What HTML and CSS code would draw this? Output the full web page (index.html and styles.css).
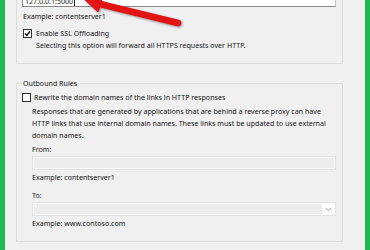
FILE: index.html
```html
<!DOCTYPE html>
<html lang="en">
<head>
    <meta charset="UTF-8">
    <meta name="viewport" content="width=device-width, initial-scale=1.0">
    <title>Reverse Proxy Settings</title>
    <link rel="stylesheet" href="styles.css">
</head>
<body>
    <div class="window">
        <div class="group group-top">
            <div class="field active"><span class="value">127.0.0.1:5000</span><span class="caret"></span></div>
            <p class="hint">Example: contentserver1</p>
            <label class="check">
                <span class="box checked">
                    <svg viewBox="0 0 9 9" width="9" height="9"><path d="M2 4.5 L3.8 6.4 L7 2.3" fill="none" stroke="#1a1a1a" stroke-width="1.5"/></svg>
                </span>
                Enable SSL Offloading
            </label>
            <p class="note">Selecting this option will forward all HTTPS requests over HTTP.</p>
        </div>

        <fieldset class="group group-rules">
            <legend>Outbound Rules</legend>
            <label class="check">
                <span class="box"></span>
                Rewrite the domain names of the links in HTTP responses
            </label>
            <p class="desc">Responses that are generated by applications that are behind a reverse proxy can have<br>HTTP links that use internal domain names. These links must be updated to use external<br>domain names.</p>
            <p class="label">From:</p>
            <div class="field disabled"></div>
            <p class="hint indent">Example: contentserver1</p>
            <p class="label label-to">To:</p>
            <div class="field select">
                <span class="drop">
                    <svg viewBox="0 0 7 5" width="7" height="5"><path d="M0.8 1 L3.5 3.8 L6.2 1" fill="none" stroke="#999" stroke-width="1"/></svg>
                </span>
            </div>
            <p class="hint indent">Example: www.contoso.com</p>
        </fieldset>

        <svg class="arrow" viewBox="0 0 370 250" width="370" height="250">
            <g fill="#e51414" stroke="#e51414">
                <line x1="178" y1="23" x2="100" y2="4" stroke-width="6.5" stroke-linecap="round"/>
                <polygon points="84,-1 98,12 104,-7" stroke-width="1" stroke-linejoin="round"/>
            </g>
        </svg>
    </div>
</body>
</html>
```

FILE: styles.css
```css
body {
    margin: 0;
    font-family: "Noto Sans", "DejaVu Sans", sans-serif;
    font-size: 7.1px;
    color: #161616;
}
p {
    margin: 0;
}
.window {
    position: relative;
    height: 250px;
    overflow: hidden;
    box-sizing: border-box;
    background: #f0f0f0;
    border-left: 5px solid #1db952;
    border-right: 5px solid #1db952;
    padding: 0 22px 0 11px;
    line-height: 9px;
}
.group {
    border: 1px solid #dcdcdc;
    margin: 0;
}
.group-top {
    border-top: none;
    padding: 0 6px 13.5px 5px;
}
.field {
    box-sizing: border-box;
    height: 14px;
}
.field.active {
    margin-top: -6px;
    height: 13px;
    background: #fff;
    border: 1px solid #8a8a8a;
    border-right-color: #c8c8c8;
    padding: 2px 0 0 2px;
    display: flex;
    align-items: center;
}
.caret {
    width: 1px;
    height: 8px;
    background: #222;
    margin-left: 1px;
}
.hint {
    margin-top: 4.5px;
    padding-left: 1px;
}
.check {
    display: flex;
    align-items: center;
    gap: 4px;
    margin-top: 8px;
    padding-left: 1px;
}
.box {
    box-sizing: border-box;
    width: 9px;
    height: 9px;
    border: 1px solid #333;
    background: #fff;
    display: flex;
    align-items: center;
    justify-content: center;
}
.box svg {
    flex: none;
}
.note {
    margin-top: 3px;
    padding-left: 14px;
}
.group-rules {
    margin-top: 15px;
    padding: 0 6px 13.5px 5px;
}
.group-rules legend {
    padding: 0 1px;
    margin-left: 0;
}
.group-rules .check {
    margin-top: 5px;
    padding-left: 0;
    gap: 3px;
}
.desc {
    margin: 3px 0 0 10px;
    line-height: 12px;
}
.label {
    margin: 4px 0 0 10px;
}
.label-to {
    margin-top: 8.5px;
}
.field.disabled,
.field.select {
    margin: 2px 0 0 10px;
    height: 14px;
    border: 1px solid #e2e2e2;
    box-shadow: inset 0 0 0 1px #fafafa;
    background: #ededed;
}
.field.select {
    margin-top: 2.5px;
    display: flex;
    justify-content: flex-end;
}
.drop {
    width: 13px;
    background: #fff;
    display: flex;
    align-items: center;
    justify-content: center;
}
.hint.indent {
    padding-left: 10px;
    margin-top: 3px;
}
.field.select + .hint.indent {
    margin-top: 2.5px;
}
.arrow {
    position: absolute;
    top: 0;
    left: -5px;
    pointer-events: none;
    filter: drop-shadow(1px 1.5px 1px rgba(0, 0, 0, 0.45));
}
```
